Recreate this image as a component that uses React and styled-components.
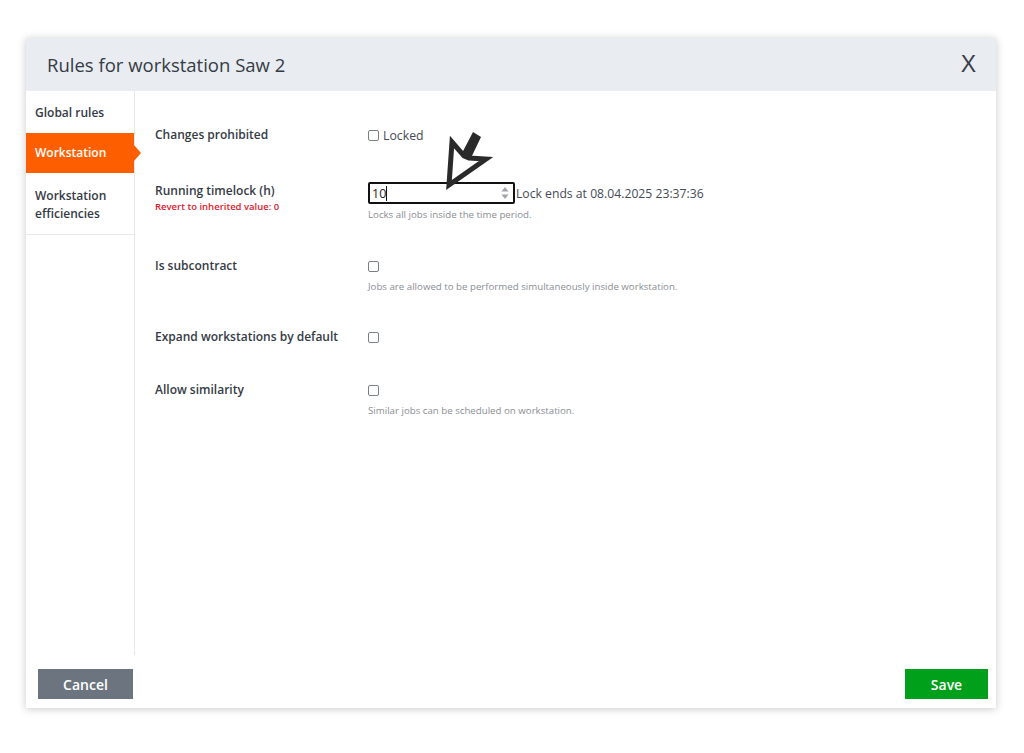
import React from 'react'
import styled, { createGlobalStyle } from 'styled-components'

const GlobalStyle = createGlobalStyle`
  *, *::before, *::after {
    box-sizing: border-box;
  }
  body {
    margin: 0;
    background: #ffffff;
    font-family: 'Open Sans', 'Liberation Sans', sans-serif;
    color: #353b45;
  }
`

const rules = [
  { label: 'Changes prohibited', kind: 'locked', gap: 37 },
  { label: 'Running timelock (h)', kind: 'timelock', gap: 36, revert: 'Revert to inherited value: 0', help: 'Locks all jobs inside the time period.' },
  { label: 'Is subcontract', kind: 'check', gap: 35, help: 'Jobs are allowed to be performed simultaneously inside workstation.' },
  { label: 'Expand workstations by default', kind: 'check', gap: 34 },
  { label: 'Allow similarity', kind: 'check', gap: 0, help: 'Similar jobs can be scheduled on workstation.' },
]

const App = () => {
  return (
    <>
      <GlobalStyle />
      <Page>
        <Modal>
          <Header>
            <Title>Rules for workstation Saw 2</Title>
            <Close>X</Close>
          </Header>
          <Body>
            <Side>
              <Tab>Global rules</Tab>
              <Tab active>Workstation</Tab>
              <Tab last>Workstation<br />efficiencies</Tab>
            </Side>
            <Content>
              {rules.map((r) => (
                <Row key={r.label} gap={r.gap}>
                  <LabelCol>
                    <Label>{r.label}</Label>
                    {r.revert && <Revert>{r.revert}</Revert>}
                  </LabelCol>
                  <Control>
                    {r.kind === 'locked' && (
                      <CheckLine>
                        <Box />
                        <span>Locked</span>
                      </CheckLine>
                    )}
                    {r.kind === 'timelock' && (
                      <InputLine>
                        <Field>
                          <span>10</span>
                          <Caret />
                          <Spinner>
                            <svg width="8" height="14" viewBox="0 0 8 14">
                              <path d="M4 1 L7.5 5.5 H0.5 Z" fill="#a0a4aa" />
                              <path d="M4 13 L7.5 8.5 H0.5 Z" fill="#a0a4aa" />
                            </svg>
                          </Spinner>
                        </Field>
                        <LockEnds>Lock ends at 08.04.2025 23:37:36</LockEnds>
                      </InputLine>
                    )}
                    {r.kind === 'check' && <Box />}
                    {r.help && <Help>{r.help}</Help>}
                  </Control>
                </Row>
              ))}
            </Content>
            <Pointer>
              <svg width="60" height="70" viewBox="0 0 60 70">
                <path
                  d="M9 57 L12 14 L24 28 L29 30 L46 31 Z"
                  fill="#ffffff"
                  stroke="#2a2a2a"
                  strokeWidth="5"
                  strokeLinejoin="miter"
                />
                <path d="M21 27 L33 4 L41 9 L30 32 Z" fill="#2a2a2a" />
              </svg>
            </Pointer>
          </Body>
          <Footer>
            <Button variant="cancel">Cancel</Button>
            <Button variant="save">Save</Button>
          </Footer>
        </Modal>
      </Page>
    </>
  )
}

const Page = styled.div`
  width: 1024px;
  height: 753px;
  padding: 38px 0 0 26px;
`

const Modal = styled.div`
  width: 970px;
  height: 670px;
  background: #fff;
  box-shadow: 0 1px 8px rgba(0, 0, 0, 0.22);
  display: flex;
  flex-direction: column;
`

const Header = styled.div`
  height: 53px;
  background: #e9edf2;
  display: flex;
  align-items: center;
  justify-content: space-between;
  padding: 0 20px 0 21px;
  flex-shrink: 0;
`

const Title = styled.div`
  font-size: 18.5px;
  font-weight: 500;
  color: #353b45;
`

const Close = styled.div`
  font-size: 23px;
  font-family: 'Liberation Sans', sans-serif;
  color: #3a3f47;
`

const Body = styled.div`
  flex: 1;
  display: flex;
  position: relative;
`

const Side = styled.div`
  width: 109px;
  border-right: 1px solid #e6e8eb;
  flex-shrink: 0;
`

const Tab = styled.div`
  position: relative;
  font-size: 12px;
  font-weight: 600;
  line-height: 18px;
  padding: ${(p) => (p.last ? '14px 9px 11px' : p.active ? '11px 9px' : '13px 9px 11px')};
  color: ${(p) => (p.active ? '#fff' : '#353b45')};
  background: ${(p) => (p.active ? '#fd5e00' : 'transparent')};
  border-bottom: ${(p) => (p.last ? '1px solid #e6e8eb' : 'none')};
  &::after {
    content: '';
    display: ${(p) => (p.active ? 'block' : 'none')};
    position: absolute;
    right: -7px;
    top: 50%;
    margin-top: -8px;
    border-left: 7px solid #fd5e00;
    border-top: 8px solid transparent;
    border-bottom: 8px solid transparent;
  }
`

const Content = styled.div`
  flex: 1;
  padding: 35px 0 0 20px;
  display: flex;
  flex-direction: column;
`

const Row = styled.div`
  display: flex;
  margin-bottom: ${(p) => p.gap}px;
`

const LabelCol = styled.div`
  width: 213px;
  flex-shrink: 0;
`

const Label = styled.div`
  font-size: 12px;
  font-weight: 600;
  line-height: 18px;
  color: #353b45;
`

const Revert = styled.div`
  font-size: 9.5px;
  font-weight: 600;
  color: #e0182d;
  line-height: 13px;
`

const Control = styled.div`
  display: flex;
  flex-direction: column;
`

const CheckLine = styled.div`
  display: flex;
  align-items: center;
  gap: 4px;
  font-size: 12.3px;
  line-height: 18px;
  color: #454b55;
`

const Box = styled.div`
  width: 11px;
  height: 11px;
  border: 1px solid #7a7f87;
  border-radius: 2px;
  margin: 4px 0;
`

const InputLine = styled.div`
  display: flex;
  align-items: center;
`

const Field = styled.div`
  position: relative;
  width: 147px;
  height: 22px;
  border: 2px solid #111;
  border-radius: 2px;
  display: flex;
  align-items: center;
  padding-left: 2px;
  font-size: 12.5px;
  color: #222;
`

const Caret = styled.div`
  width: 1px;
  height: 15px;
  background: #111;
`

const Spinner = styled.div`
  position: absolute;
  right: 4px;
  top: 2px;
  display: flex;
`

const LockEnds = styled.div`
  font-size: 12.2px;
  color: #454b55;
  margin-left: 1px;
`

const Help = styled.div`
  font-size: 9.7px;
  color: #8a8e94;
  margin-top: 4px;
  line-height: 13px;
`

const Pointer = styled.div`
  position: absolute;
  left: 414px;
  top: 37px;
  pointer-events: none;
`

const Footer = styled.div`
  height: 53px;
  flex-shrink: 0;
  display: flex;
  justify-content: space-between;
  align-items: flex-start;
  padding: 14px 8px 0 12px;
`

const Button = styled.div`
  height: 30px;
  width: ${(p) => (p.variant === 'save' ? '83px' : '95px')};
  background: ${(p) => (p.variant === 'save' ? '#00a01a' : '#6c757f')};
  color: #fff;
  font-size: 14px;
  font-weight: 600;
  display: flex;
  align-items: center;
  justify-content: center;
`

export default App
